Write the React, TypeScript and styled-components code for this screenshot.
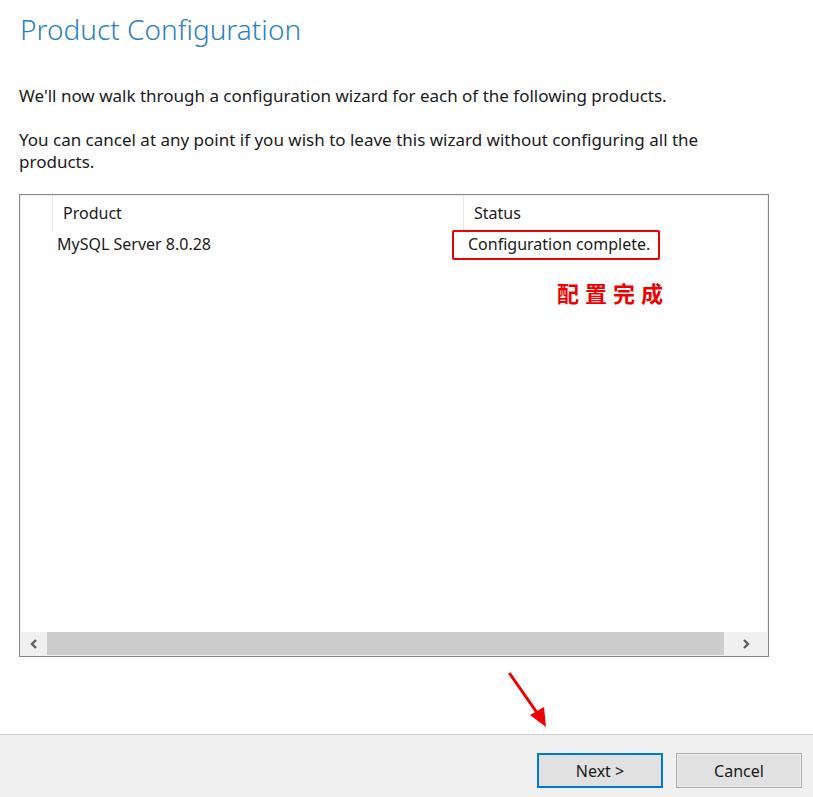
import styled, { createGlobalStyle } from 'styled-components';

const GlobalStyle = createGlobalStyle`
  html, body {
    margin: 0;
    padding: 0;
    background: #ffffff;
  }
  body {
    font-family: 'Noto Sans', 'Open Sans', sans-serif;
    color: #000;
  }
`;

const Chevron = ({ dir }: { dir: 'left' | 'right' }) => (
  <svg width='10' height='12' viewBox='0 0 10 12'>
    <polyline
      points={dir === 'left' ? '7,2 3,6 7,10' : '3,2 7,6 3,10'}
      fill='none'
      stroke='#606060'
      strokeWidth='2.4'
    />
  </svg>
);

const App = () => {
  return (
    <Page>
      <GlobalStyle />
      <Content>
        <Title>Product Configuration</Title>
        <Paragraph>We'll now walk through a configuration wizard for each of the following products.</Paragraph>
        <Paragraph>
          You can cancel at any point if you wish to leave this wizard without configuring all the products.
        </Paragraph>
        <ListBox>
          <HeaderRow>
            <IndentCell />
            <HeaderCell $width={411}>Product</HeaderCell>
            <HeaderCell>Status</HeaderCell>
          </HeaderRow>
          <Body>
            <Row>
              <RowCell $width={411}>MySQL Server 8.0.28</RowCell>
              <RowCell>Configuration complete.</RowCell>
            </Row>
            <Highlight />
            <Note>配置完成</Note>
          </Body>
          <ScrollBar>
            <ScrollButton $width={26}>
              <Chevron dir='left' />
            </ScrollButton>
            <Thumb />
            <ScrollButton $width={43}>
              <Chevron dir='right' />
            </ScrollButton>
          </ScrollBar>
        </ListBox>
        <Pointer width='50' height='62' viewBox='0 0 50 62'>
          <line x1='4' y1='3' x2='34' y2='46' stroke='#f00000' strokeWidth='3' strokeLinecap='round' />
          <polygon points='40,56 24,44 38,36' fill='#f00000' />
        </Pointer>
      </Content>
      <Footer>
        <Button $primary>Next &gt;</Button>
        <Button>Cancel</Button>
      </Footer>
    </Page>
  );
};

export default App;

const Page = styled.div`
  width: 813px;
  height: 797px;
  display: flex;
  flex-direction: column;
  background: #fff;
  overflow: hidden;
`;

const Content = styled.div`
  position: relative;
  flex: 1;
  padding: 0 44px 0 19px;
`;

const Title = styled.h1`
  margin: 10px 0 0 1px;
  font-family: 'Noto Sans', sans-serif;
  font-weight: 300;
  font-size: 28px;
  line-height: 38px;
  color: #2d7fc1;
`;

const Paragraph = styled.p`
  margin: 0;
  font-size: 17px;
  line-height: 22px;
  color: #1a1a1a;

  & + & {
    margin-top: 22px;
  }

  h1 + & {
    margin-top: 37px;
  }
`;

const ListBox = styled.div`
  margin-top: 21px;
  height: 463px;
  border: 1px solid #828790;
  box-shadow: inset 0 0 0 1px #f0f0f0;
  display: flex;
  flex-direction: column;
  box-sizing: border-box;
`;

const HeaderRow = styled.div`
  display: flex;
  height: 36px;
  align-items: center;
`;

const IndentCell = styled.div`
  width: 32px;
  height: 100%;
  border-right: 1px solid #e5e5e5;
`;

const HeaderCell = styled.div<{ $width?: number }>`
  width: ${({ $width }) => ($width ? `${$width}px` : 'auto')};
  flex: ${({ $width }) => ($width ? 'none' : '1')};
  height: 100%;
  display: flex;
  align-items: center;
  padding-left: 10px;
  box-sizing: border-box;
  border-right: ${({ $width }) => ($width ? '1px solid #e5e5e5' : 'none')};
  font-size: 16px;
  color: #1a1a1a;
`;

const Body = styled.div`
  position: relative;
  flex: 1;
`;

const Row = styled.div`
  display: flex;
  padding-left: 32px;
  height: 26px;
  align-items: center;
`;

const RowCell = styled.div<{ $width?: number }>`
  width: ${({ $width }) => ($width ? `${$width}px` : 'auto')};
  flex: ${({ $width }) => ($width ? 'none' : '1')};
  padding-left: 5px;
  box-sizing: border-box;
  font-size: 16px;
  color: #1a1a1a;
  white-space: nowrap;
`;

const Highlight = styled.div`
  position: absolute;
  left: 432px;
  top: -1px;
  width: 208px;
  height: 30px;
  border: 2px solid #f00000;
  box-sizing: border-box;
  border-radius: 2px;
`;

const Note = styled.div`
  position: absolute;
  left: 537px;
  top: 50px;
  font-family: 'Noto Sans CJK SC', serif;
  font-size: 22px;
  letter-spacing: 6px;
  color: #f00000;
  font-weight: 700;
  line-height: 1;
`;

const ScrollBar = styled.div`
  display: flex;
  height: 23px;
  background: #f0f0f0;
  margin: 0 1px 1px 1px;
`;

const ScrollButton = styled.div<{ $width: number }>`
  width: ${({ $width }) => $width}px;
  display: flex;
  align-items: center;
  justify-content: center;
  background: #f0f0f0;
`;

const Thumb = styled.div`
  flex: 1;
  background: #cdcdcd;
`;

const Pointer = styled.svg`
  position: absolute;
  left: 506px;
  top: 671px;
`;

const Footer = styled.div`
  height: 63px;
  border-top: 1px solid #cfcfcf;
  background: #f0f0f0;
  display: flex;
  justify-content: flex-end;
  align-items: flex-start;
  gap: 13px;
  padding: 18px 11px 0 0;
  box-sizing: border-box;
`;

const Button = styled.button<{ $primary?: boolean }>`
  width: 126px;
  height: 35px;
  box-sizing: border-box;
  font-family: 'Noto Sans', sans-serif;
  font-size: 16px;
  color: #1a1a1a;
  background: #e1e1e1;
  border: ${({ $primary }) => ($primary ? '2px solid #0078d7' : '1px solid #adadad')};
  box-shadow: ${({ $primary }) => ($primary ? 'none' : 'inset 0 0 0 1px #ececec')};
  padding: 0;
`;
